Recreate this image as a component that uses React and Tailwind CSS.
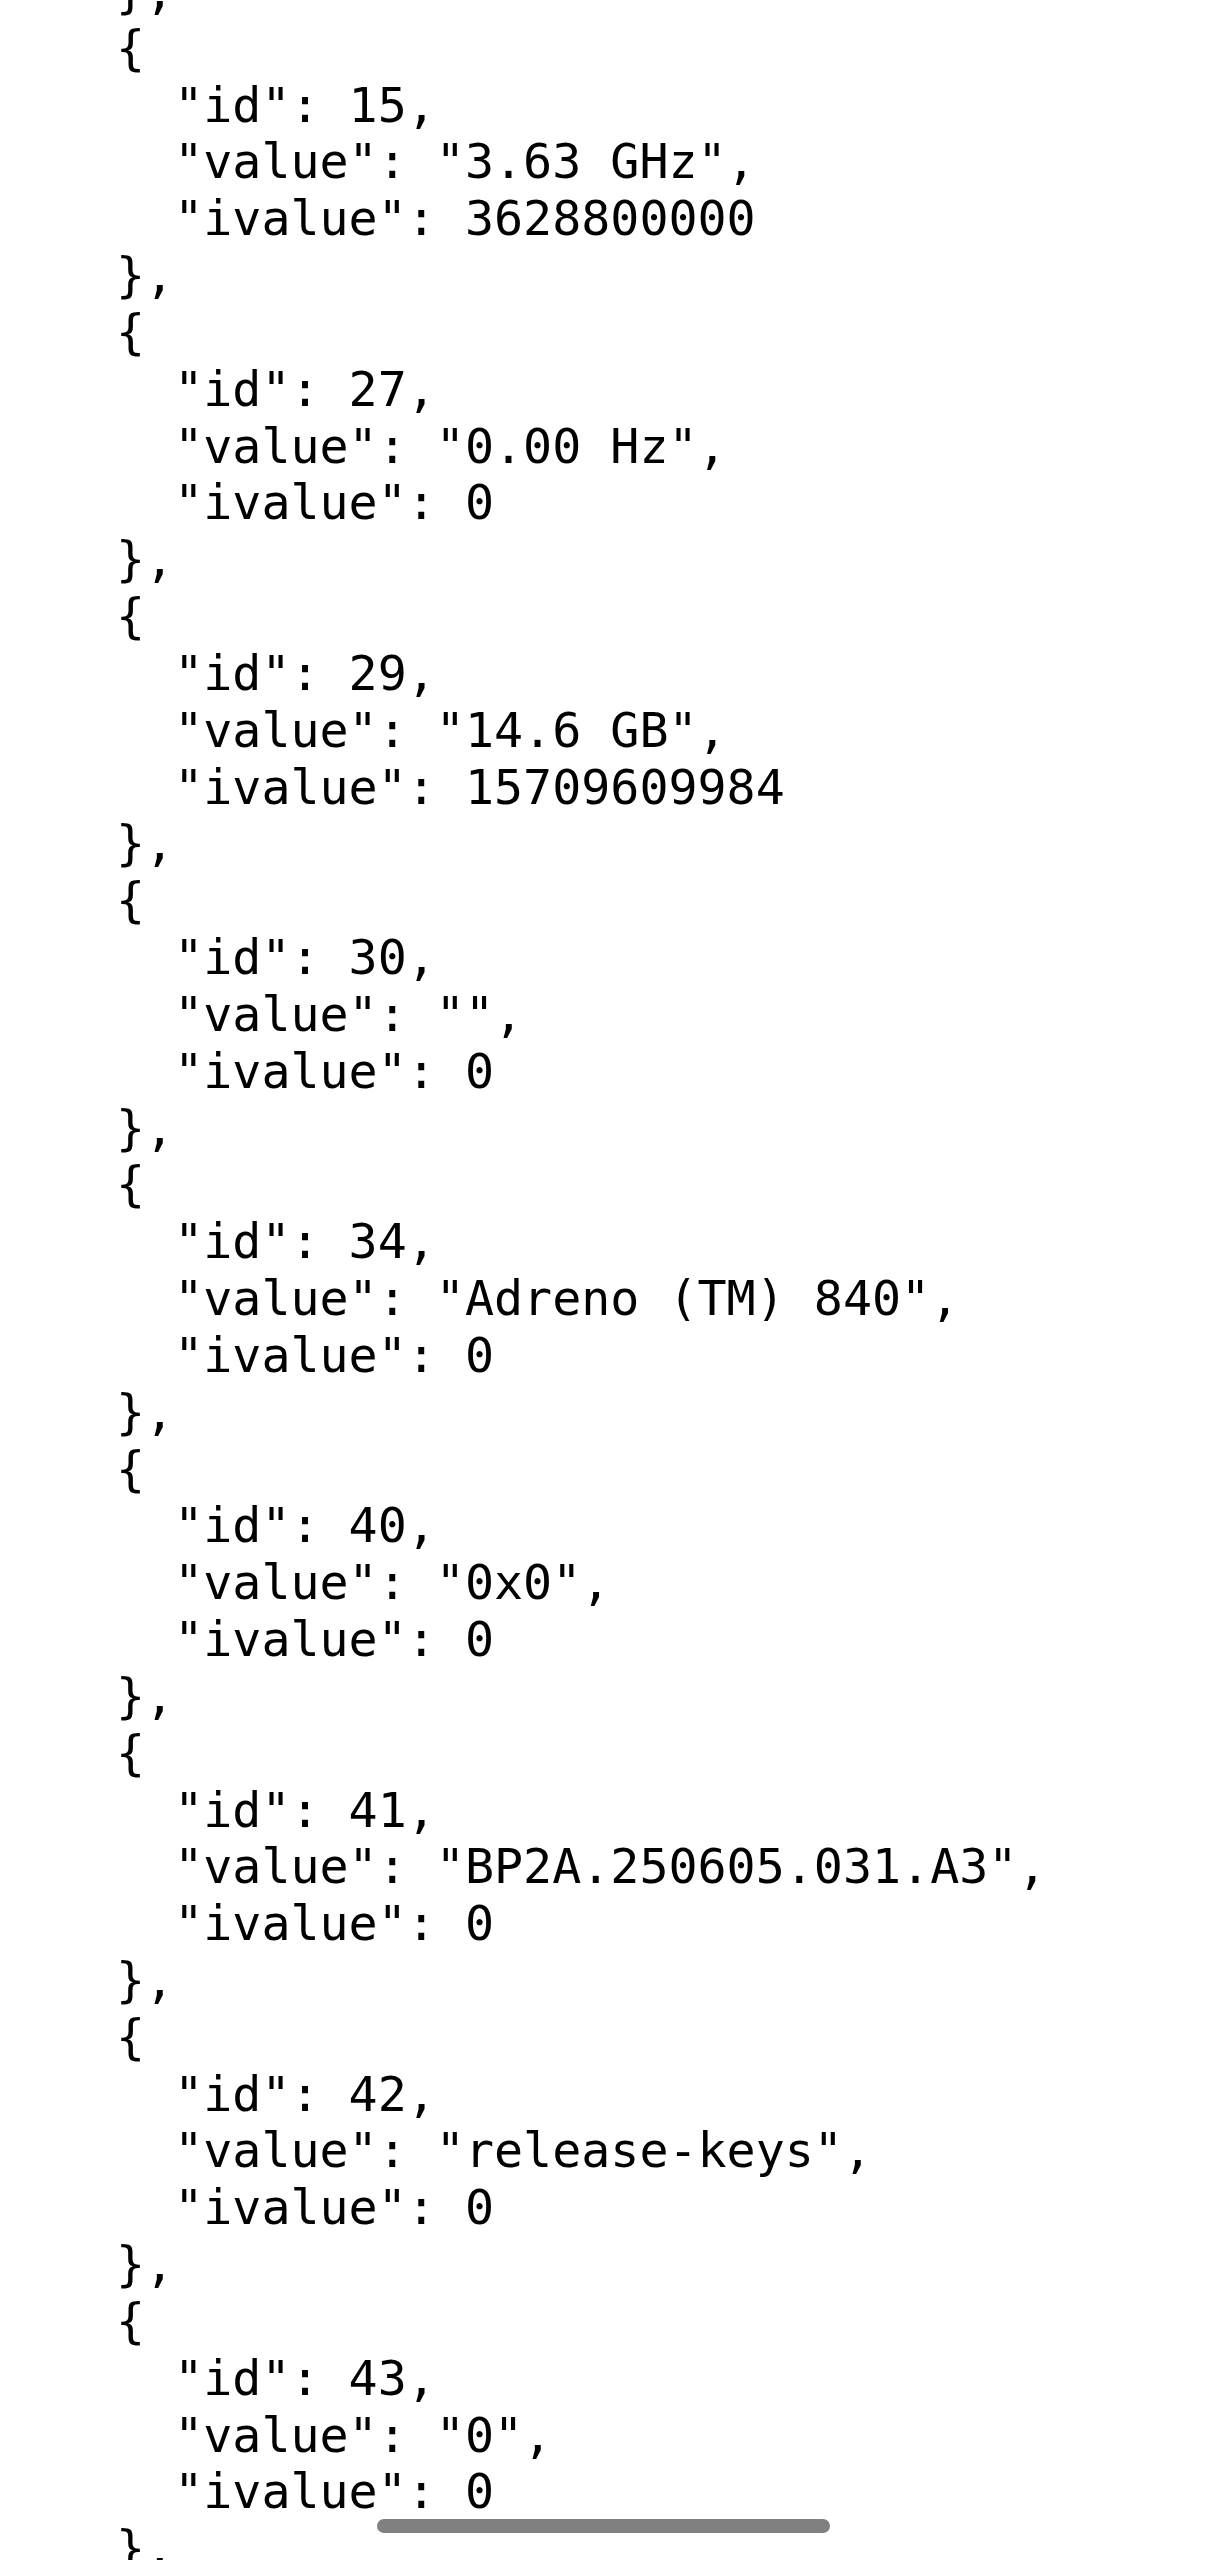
const items = [
  { id: 15, value: '"3.63 GHz"', ivalue: "3628800000" },
  { id: 27, value: '"0.00 Hz"', ivalue: "0" },
  { id: 29, value: '"14.6 GB"', ivalue: "15709609984" },
  { id: 30, value: '""', ivalue: "0" },
  { id: 34, value: '"Adreno (TM) 840"', ivalue: "0" },
  { id: 40, value: '"0x0"', ivalue: "0" },
  { id: 41, value: '"BP2A.250605.031.A3"', ivalue: "0" },
  { id: 42, value: '"release-keys"', ivalue: "0" },
  { id: 43, value: '"0"', ivalue: "0" },
];

const lines = ["},"];
items.forEach((item) => {
  lines.push("{");
  lines.push(`  "id": ${item.id},`);
  lines.push(`  "value": ${item.value},`);
  lines.push(`  "ivalue": ${item.ivalue}`);
  lines.push("},");
});

export default function App() {
  return (
    <div className="relative h-[2560px] w-[1208px] overflow-hidden bg-white">
      <pre className="-mt-[37px] pl-[116px] font-['DejaVu_Sans_Mono',monospace] text-[48.3px] leading-[56.83px] text-black">
        {lines.map((line, i) => (
          <div key={i} className="whitespace-pre">
            {line}
          </div>
        ))}
      </pre>

      {/* system gesture bar */}
      <div className="absolute left-[377px] top-[2519px] h-[14px] w-[453px] rounded-full bg-[#808080]" />
    </div>
  );
}
